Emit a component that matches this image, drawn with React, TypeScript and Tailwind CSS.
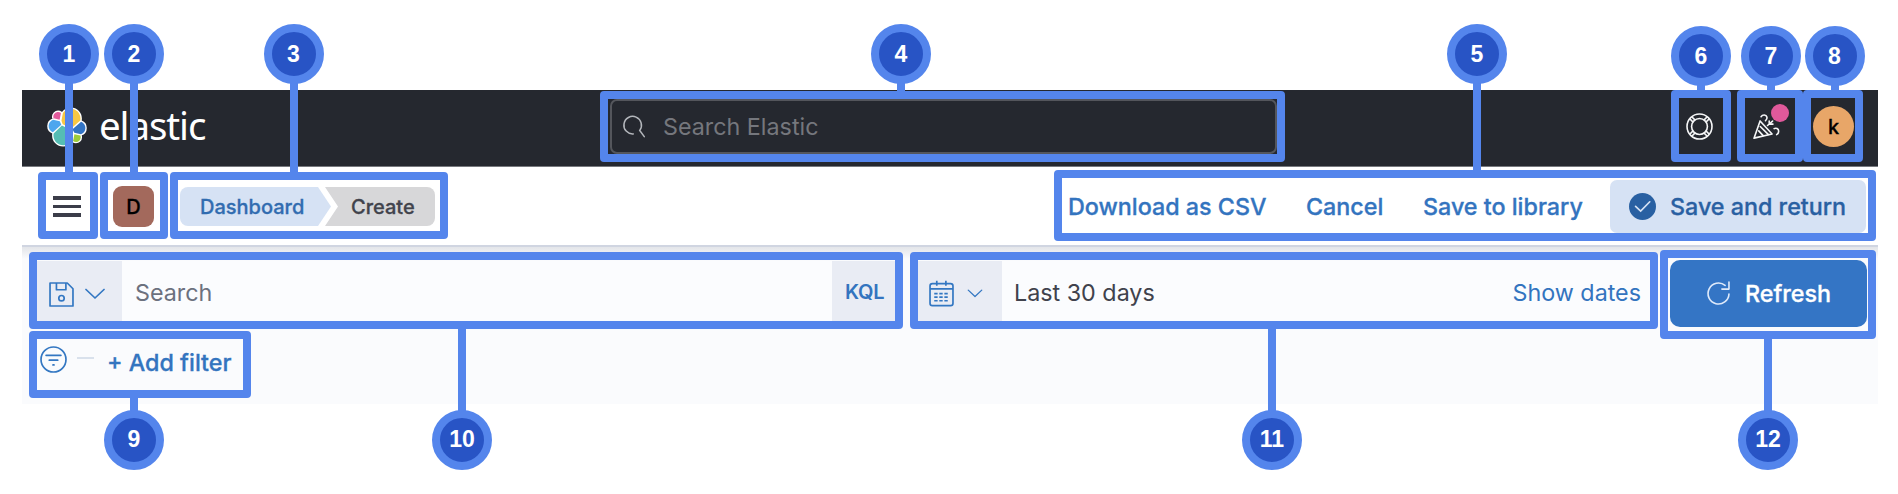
import type { ReactNode } from "react";
import clsx from "clsx";

const YELLOW =
  "M12.58 13.787l7.002 3.211 7.066-6.213a7.85 7.85 0 00.152-1.557c0-4.287-3.464-7.776-7.72-7.776-2.55 0-4.923 1.267-6.357 3.39l-1.176 6.127z";
const TEAL =
  "M5.333 21.228A7.94 7.94 0 005.18 22.8c0 4.3 3.475 7.798 7.747 7.798a7.71 7.71 0 006.393-3.405l1.166-6.103-1.556-2.988-7.03-3.217z";
const PINK =
  "M5.288 9.067l4.8 1.137L11.14 4.73a3.785 3.785 0 00-2.29-.77c-2.09 0-3.79 1.716-3.79 3.825 0 .44.077.876.228 1.282";
const SKY =
  "M4.872 10.214c-2.141.715-3.596 2.781-3.596 5.054 0 2.214 1.364 4.19 3.411 4.974l6.733-6.12-1.236-2.66z";
const GREEN =
  "M20.873 27.185a3.77 3.77 0 002.282.77c2.09 0 3.79-1.716 3.79-3.825 0-.443-.077-.877-.228-1.283l-4.796-1.128z";
const BLUE =
  "M21.848 20.563l5.279 1.24c2.142-.715 3.597-2.781 3.597-5.054 0-2.21-1.367-4.183-3.418-4.97l-6.904 6.08z";

function ElasticMark() {
  return (
    <svg viewBox="0 0 32 32" className="h-10 w-10 shrink-0">
      <g fill="#fff" stroke="#fff" strokeWidth="2.2" strokeLinejoin="round">
        <path d={YELLOW} />
        <path d={TEAL} />
        <path d={PINK} />
        <path d={SKY} />
        <path d={GREEN} />
        <path d={BLUE} />
      </g>
      <path fill="#f7c744" d={YELLOW} />
      <path fill="#55bdb4" d={TEAL} />
      <path fill="#e25a9c" d={PINK} />
      <path fill="#4da6ee" d={SKY} />
      <path fill="#9dcb3b" d={GREEN} />
      <path fill="#3274c5" d={BLUE} />
    </svg>
  );
}

function Icon({ className, children }: { className?: string; children: ReactNode }) {
  return (
    <svg
      viewBox="0 0 16 16"
      fill="none"
      stroke="currentColor"
      className={clsx("h-[27px] w-[27px] shrink-0", className)}
    >
      {children}
    </svg>
  );
}

function SearchIcon() {
  return (
    <Icon className="text-[#b4b7bc]">
      <path strokeWidth="0.9" strokeLinecap="round" d="M7.3 12.4A5.2 5.2 0 1 1 11.1 10.3L13.8 14" />
    </Icon>
  );
}

function HelpIcon() {
  return (
    <Icon className="text-[#f5f6f7]">
      <circle cx="8" cy="8" r="7.4" strokeWidth="0.95" />
      <circle cx="8" cy="8" r="4.7" strokeWidth="0.95" />
      <path
        strokeWidth="0.95"
        d="M2.2 3.4L4.2 5.4M3.4 2.2L5.4 4.2M13.8 3.4L11.8 5.4M12.6 2.2L10.6 4.2M2.2 12.6L4.2 10.6M3.4 13.8L5.4 11.8M13.8 12.6L11.8 10.6M12.6 13.8L10.6 11.8"
      />
    </Icon>
  );
}

function CheerIcon() {
  return (
    <Icon className="text-[#f5f6f7]">
      <g strokeWidth="0.95" strokeLinecap="round" strokeLinejoin="round">
        <path d="M4.2 4.7L.6 14.9L11.3 12.4Z" />
        <path d="M3.4 10.6L6 13.4M4.3 8L9 12.7" />
        <path d="M4.8 2.2C5.6.9 7.8.7 8.3 2.5C8.5 3.4 8 4 7.4 4.6" />
        <path d="M12.5 9.3C13.6 8.6 15.2 9.3 15.2 10.8C15.2 11.9 14.6 12.5 14 12.8" />
        <path d="M8.6 7.4L11.6 4.8M9.6 4.8V6.6H11.8" />
      </g>
    </Icon>
  );
}

function SaveIcon() {
  return (
    <Icon className="text-[#3377c2]">
      <g strokeWidth="1" strokeLinejoin="round">
        <path d="M1.2 1.2H11.4L14.8 4.6V14.8H1.2Z" />
        <path d="M5 1.2V5.2H10.6V1.2" />
        <circle cx="8" cy="10.2" r="1.6" />
      </g>
    </Icon>
  );
}

function CalendarIcon() {
  return (
    <Icon className="text-[#3377c2]">
      <g strokeWidth="1">
        <rect x="1.2" y="2.1" width="13.6" height="13.1" rx="1.4" />
        <path d="M1.2 5.3H14.8M5.2 .4V3.4M10.6 .4V3.4" />
        <path strokeDasharray="2 1" d="M3.7 8.1H12.3M3.7 10.2H12.3M3.7 12.3H12.3" />
      </g>
    </Icon>
  );
}

function FilterIcon() {
  return (
    <Icon className="text-[#3377c2]">
      <g strokeWidth="1" strokeLinecap="round">
        <circle cx="8" cy="8" r="7.4" />
        <path d="M3.6 5.5H12.4M5.5 8.4H10.5M7.7 11.2H8.3" />
      </g>
    </Icon>
  );
}

function RefreshIcon() {
  return (
    <Icon className="text-[#dfeafa]">
      <g strokeWidth="0.95" strokeLinecap="round" strokeLinejoin="round">
        <path d="M14.2 8.3A6.2 6.2 0 1 1 11.9 3.2" />
        <path d="M14.2 1.2V5.4H10" />
      </g>
    </Icon>
  );
}

function Chevron({ className }: { className: string }) {
  return (
    <svg viewBox="0 0 20 12" fill="none" stroke="#3377c2" className={clsx("shrink-0", className)}>
      <path strokeWidth="1.7" strokeLinecap="round" strokeLinejoin="round" d="M1 1.5L10 10L19 1.5" />
    </svg>
  );
}

const TEXT = "whitespace-nowrap text-[23.3px] leading-none";
const MEDIUM = "font-medium [-webkit-text-stroke:0.3px_currentColor]";

function Header() {
  return (
    <header className="flex h-[77px] items-center border-b border-[#77797e] bg-[#25282f] pb-[3px] pl-[25px]">
      <ElasticMark />
      <span className="ml-[12px] w-[411px] pb-[2px] font-['Noto_Sans'] text-[38.5px] leading-none font-normal tracking-[-1.1px] text-white">
        elastic
      </span>
      <div className="ml-[100px] flex h-[55px] w-[667px] shrink-0 items-center gap-[15px] rounded-[7px] border-2 border-[#54565c] pl-[9px] text-[#75777d]">
        <SearchIcon />
        <span className={TEXT}>Search Elastic</span>
      </div>
      <div className="ml-[409px] flex items-center">
        <HelpIcon />
        <div className="relative ml-[40px] flex">
          <CheerIcon />
          <span className="absolute -top-[9px] left-[18px] size-[18px] rounded-full bg-[#e0599b]" />
        </div>
        <span
          className={clsx(
            "ml-[33px] flex size-[41px] items-center justify-center rounded-full bg-[#e8a668] text-[20px] text-black",
            MEDIUM,
          )}
        >
          k
        </span>
      </div>
    </header>
  );
}

function NavBar() {
  return (
    <nav className="flex h-[78px] items-center bg-white pt-[1px] pl-[31px]">
      <div className="flex w-[28px] flex-col gap-[5px]">
        <span className="h-[3.5px] bg-[#3b3d49]" />
        <span className="h-[3.5px] bg-[#3b3d49]" />
        <span className="h-[3.5px] bg-[#3b3d49]" />
      </div>
      <span
        className={clsx(
          "ml-[32px] flex size-[41px] items-center justify-center rounded-[9px] bg-[#a3695c] text-[20px] text-black",
          MEDIUM,
        )}
      >
        D
      </span>
      <div className={clsx("ml-[26px] flex items-center text-[20px]", MEDIUM)}>
        <span className="flex h-[39px] w-[151px] items-center rounded-l-[8px] bg-[#d6e2f4] pl-[20px] text-[#316cb0] [clip-path:polygon(0_0,138px_0,100%_50%,138px_100%,0_100%)]">
          Dashboard
        </span>
        <span className="-ml-[6px] flex h-[39px] w-[110px] items-center rounded-r-[8px] bg-[#d7d7d9] pl-[26px] text-[#41434c] [clip-path:polygon(0_0,100%_0,100%_100%,0_100%,13px_50%)]">
          Create
        </span>
      </div>
      <div className={clsx("ml-[633px] flex items-center text-[#3374bf]", MEDIUM)}>
        <span className={clsx(TEXT, "w-[238px]")}>Download as CSV</span>
        <span className={clsx(TEXT, "w-[117px]")}>Cancel</span>
        <span className={clsx(TEXT, "w-[187px]")}>Save to library</span>
        <span className="flex h-[53px] w-[256px] items-center rounded-[7px] bg-[#d6e2f4] pl-[19px] text-[#2960a2]">
          <svg viewBox="0 0 16 16" className="mr-[14px] size-[27px]">
            <circle cx="8" cy="8" r="8" fill="#2960a2" />
            <path d="M3.9 7.9L6.9 10.7L12.3 5.2" fill="none" stroke="#d6e2f4" strokeLinecap="round" />
          </svg>
          <span className={TEXT}>Save and return</span>
        </span>
      </div>
    </nav>
  );
}

function QueryArea() {
  return (
    <section className="h-[159px] border-t-2 border-[#d0d5e1] bg-[#fafbfd]">
      <div className="flex h-[84px] items-start bg-linear-to-b from-[#e3e5e9] to-[#fafbfd] to-[12px] pt-[13px] pl-[15px]">
        <div className="mt-[1px] flex h-[62px] w-[858px] items-center bg-[#fbfcfe]">
          <div className="flex h-full w-[85px] items-center bg-[#e9ecf4] pt-[4px] pl-[11px]">
            <SaveIcon />
            <Chevron className="ml-[10px] h-3 w-5" />
          </div>
          <span className={clsx(TEXT, "grow pt-[2px] pl-[13px] text-[#6c717e]")}>Search</span>
          <span className="flex h-full w-[63px] items-center bg-[#e9ecf4] pl-[13px] text-[20px] font-semibold tracking-[-0.2px] text-[#3374bf]">
            KQL
          </span>
        </div>
        <div className="mt-[1px] ml-[23px] flex h-[62px] w-[732px] items-center bg-[#fbfcfe]">
          <div className="flex h-full w-[84px] items-center bg-[#e9ecf4] pt-[2px] pl-[10px]">
            <CalendarIcon />
            <Chevron className="ml-[12px] h-[9px] w-[16px]" />
          </div>
          <span className={clsx(TEXT, "grow pt-[2px] pl-[12px] text-[#40424c]")}>Last 30 days</span>
          <span className={clsx(TEXT, "pt-[2px] pr-[9px] text-[#3374bf]")}>Show dates</span>
        </div>
        <div className="ml-[20px] flex h-[67px] w-[197px] items-center rounded-[10px] bg-[#3475c5] pl-[35px] text-white">
          <RefreshIcon />
          <span className={clsx(TEXT, MEDIUM, "ml-[13px]")}>Refresh</span>
        </div>
      </div>
      <div className="flex items-center pt-[15px] pl-[18px]">
        <div className="flex pb-[2px]">
          <FilterIcon />
        </div>
        <span className="mb-[6px] ml-[10px] h-[2px] w-[17px] bg-[#d9e1ec]" />
        <span className={clsx(TEXT, MEDIUM, "ml-[13px] pt-[4px] text-[#3374bf]")}>+ Add filter</span>
      </div>
    </section>
  );
}

const CALLOUTS = [
  { n: 1, frame: "left-[38px] top-[172px] h-[67px] w-[60px]", line: "left-[65px] top-[80px] h-[94px]", dot: "left-[39px] top-[24px]" },
  { n: 2, frame: "left-[100px] top-[172px] h-[67px] w-[68px]", line: "left-[130px] top-[80px] h-[94px]", dot: "left-[104px] top-[24px]" },
  { n: 3, frame: "left-[170px] top-[172px] h-[67px] w-[278px]", line: "left-[289.5px] top-[80px] h-[94px]", dot: "left-[263.5px] top-[24px]" },
  { n: 4, frame: "left-[600px] top-[91px] h-[71px] w-[685px]", line: "left-[897px] top-[80px] h-[13px]", dot: "left-[871px] top-[24px]" },
  { n: 5, frame: "left-[1054px] top-[170px] h-[71px] w-[822px]", line: "left-[1473px] top-[80px] h-[92px]", dot: "left-[1447px] top-[24px]" },
  { n: 6, frame: "left-[1671px] top-[90px] h-[72px] w-[60px]", line: "left-[1697px] top-[82px] h-[10px]", dot: "left-[1671px] top-[26px]" },
  { n: 7, frame: "left-[1737px] top-[90px] h-[72px] w-[66px]", line: "left-[1767px] top-[82px] h-[10px]", dot: "left-[1741px] top-[26px]" },
  { n: 8, frame: "left-[1803px] top-[90px] h-[72px] w-[60px]", line: "left-[1831px] top-[82px] h-[10px]", dot: "left-[1804.5px] top-[26px]" },
  { n: 9, frame: "left-[29px] top-[331px] h-[67px] w-[222px]", line: "left-[130px] top-[396px] h-[18px]", dot: "left-[104px] top-[409.5px]" },
  { n: 10, frame: "left-[29px] top-[252px] h-[77px] w-[874px]", line: "left-[458px] top-[327px] h-[87px]", dot: "left-[432px] top-[409.5px]" },
  { n: 11, frame: "left-[910px] top-[252px] h-[77px] w-[748px]", line: "left-[1268px] top-[327px] h-[87px]", dot: "left-[1242px] top-[409.5px]" },
  { n: 12, frame: "left-[1660px] top-[250px] h-[89px] w-[216px]", line: "left-[1764px] top-[337px] h-[77px]", dot: "left-[1738px] top-[409.5px]" },
];

function Callout({ n, frame, line, dot }: (typeof CALLOUTS)[number]) {
  return (
    <>
      <div className={clsx("absolute rounded-[4px] border-8 border-[#5485ec]", frame)} />
      <div className={clsx("absolute w-2 bg-[#5485ec]", line)} />
      <div
        className={clsx(
          "absolute flex size-[60px] items-center justify-center rounded-full border-8 border-[#5485ec] bg-[#2854c5] font-['Liberation_Sans'] text-[23px] leading-none font-bold text-white",
          dot,
        )}
      >
        {n}
      </div>
    </>
  );
}

export default function App() {
  return (
    <main className="relative h-[494px] w-[1898px] overflow-hidden bg-white px-[22px] pt-[90px] font-[Inter,sans-serif]">
      <div className="w-[1856px] overflow-hidden">
        <Header />
        <NavBar />
        <QueryArea />
      </div>
      {CALLOUTS.map((c) => (
        <Callout key={c.n} {...c} />
      ))}
    </main>
  );
}
